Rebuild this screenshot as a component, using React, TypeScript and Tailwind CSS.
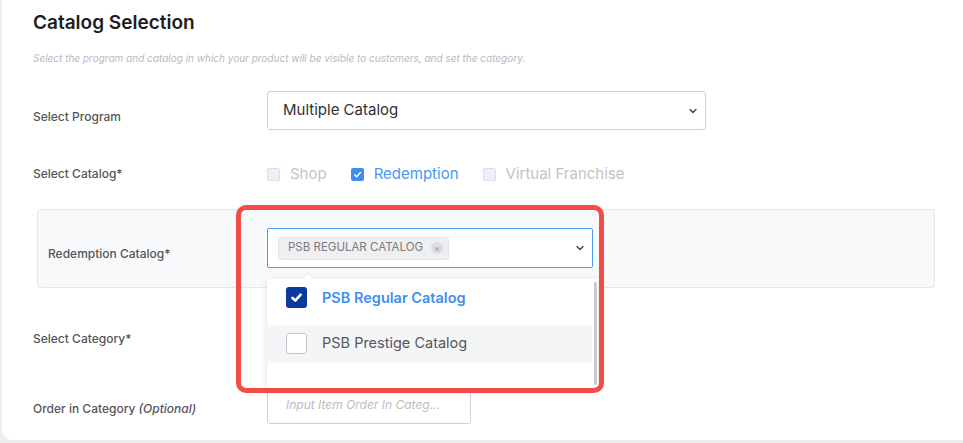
const Chevron = ({ className = "" }: { className?: string }) => (
  <svg viewBox="0 0 12 12" className={className} fill="none" stroke="currentColor" strokeWidth={1.4}>
    <path d="M3 4.5 6 7.5 9 4.5" strokeLinecap="round" strokeLinejoin="round" />
  </svg>
);

const Tick = ({ className = "" }: { className?: string }) => (
  <svg viewBox="0 0 12 12" className={className} fill="none" stroke="currentColor" strokeWidth={1.5}>
    <path d="M2.8 6.3 5 8.4 9.3 3.8" strokeLinecap="round" strokeLinejoin="round" />
  </svg>
);

const Label = ({ children }: { children: React.ReactNode }) => (
  <div className="w-[234px] shrink-0 text-[12px] font-medium text-[#55555c]">{children}</div>
);

const CatalogOption = ({ label, checked }: { label: string; checked?: boolean }) => (
  <label className="flex items-center gap-[10px] mr-[24px]">
    <span
      className={
        checked
          ? "w-[13px] h-[13px] rounded-[2px] bg-[#3d8ef2] text-white flex items-center justify-center"
          : "w-[13px] h-[13px] rounded-[2px] bg-[#eef1f9] border border-[#d9dde6]"
      }
    >
      {checked && <Tick className="w-[11px] h-[11px]" />}
    </span>
    <span className={checked ? "text-[15px] text-[#4a97f3]" : "text-[15px] text-[#c2c3c9]"}>{label}</span>
  </label>
);

export default function App() {
  return (
    <div className="min-h-[443px] bg-[#eeeeef] pl-[2px] font-[Inter,'Noto_Sans',sans-serif]">
      <div className="relative h-[440px] bg-white rounded-bl-[10px] pl-[31px] pt-[10px]">
        <h1 className="text-[19px] font-semibold text-[#1d1d22] leading-[26px]">Catalog Selection</h1>
        <p className="mt-[16px] text-[10px] italic text-[#b9b9c2] leading-[12px]">
          Select the program and catalog in which your product will be visible to customers, and set the category.
        </p>

        {/* program */}
        <div className="mt-[27px] flex items-center">
          <div className="mt-[13px]">
            <Label>Select Program</Label>
          </div>
          <div className="w-[439px] h-[39px] border border-[#cfd1d8] rounded-[3px] flex items-center justify-between pl-[15px] pr-[6px]">
            <span className="text-[15px] text-[#303036]">Multiple Catalog</span>
            <Chevron className="w-[12px] h-[12px] text-[#444]" />
          </div>
        </div>

        {/* catalogs */}
        <div className="mt-[32px] flex items-center h-[24px]">
          <Label>Select Catalog*</Label>
          <CatalogOption label="Shop" />
          <CatalogOption label="Redemption" checked />
          <CatalogOption label="Virtual Franchise" />
        </div>

        {/* redemption catalog */}
        <div className="mt-[23px] ml-[4px] w-[898px] h-[79px] bg-[#f8f9fb] border border-[#e4e6eb] rounded-[4px] flex items-center pl-[10px]">
          <div className="w-[219px] shrink-0 mt-[11px] text-[12px] font-medium text-[#55555c]">Redemption Catalog*</div>
          <div className="w-[326px] h-[40px] bg-white border border-[#4b9cf4] rounded-[2px] flex items-center justify-between pl-[10px] pr-[6px] -mt-[1px]">
            <span className="h-[23px] flex items-center gap-[8px] bg-[#efeff1] border border-[#e4e4e7] rounded-[3px] pl-[9px] pr-[5px]">
              <span className="text-[11.5px] text-[#7a7a82]">PSB REGULAR CATALOG</span>
              <span className="w-[12px] h-[12px] rounded-full bg-[#dcdce0] text-[#9a9aa2] flex items-center justify-center text-[9px] leading-none">×</span>
            </span>
            <Chevron className="w-[12px] h-[12px] text-[#444]" />
          </div>
        </div>

        {/* category */}
        <div className="mt-[39px] flex items-center h-[24px]">
          <Label>Select Category*</Label>
        </div>

        {/* order */}
        <div className="mt-[38px] flex items-center">
          <div className="mt-[4px]">
            <Label>
              Order in Category <span className="italic">(Optional)</span>
            </Label>
          </div>
          <div className="w-[204px] h-[35px] border border-[#cfd1d8] rounded-[3px] flex items-center pl-[18px]">
            <span className="text-[12px] italic text-[#bcbcc4] -mt-[4px]">Input Item Order In Categ...</span>
          </div>
        </div>

        {/* open dropdown of the redemption multi-select */}
        <div className="absolute left-[265px] top-[279px] w-[331px] h-[109px] bg-white shadow-[0_2px_8px_rgba(0,0,0,0.12)]">
          <div className="absolute left-[36px] -top-[5px] w-[10px] h-[10px] bg-white rotate-45 border-l border-t border-[#e8e9ed]" />
          <div className="relative flex items-center h-[37px] pl-[19px] gap-[15px]">
            <span className="w-[21px] h-[21px] rounded-[3px] bg-[#0a3a9e] text-white flex items-center justify-center">
              <svg viewBox="0 0 12 12" className="w-[13px] h-[13px]" fill="none" stroke="currentColor" strokeWidth={2.4}>
                <path d="M2.3 6.4 4.9 8.8 9.8 3.4" strokeLinecap="round" strokeLinejoin="round" />
              </svg>
            </span>
            <span className="text-[14.5px] font-semibold text-[#3f8ff2]">PSB Regular Catalog</span>
          </div>
          <div className="mt-[9px] flex items-center h-[38px] pl-[19px] gap-[15px] bg-[#f4f5f7] mr-[6px]">
            <span className="w-[21px] h-[21px] rounded-[3px] bg-white border border-[#c4c6cc] -mt-[2px]" />
            <span className="text-[14.5px] text-[#57575e] -mt-[3px]">PSB Prestige Catalog</span>
          </div>
          <div className="absolute right-[1px] top-[3px] bottom-[3px] w-[3px] rounded-full bg-[#c9cacf]" />
        </div>

        {/* highlight frame */}
        <div className="absolute left-[234px] top-[205px] w-[368px] h-[188px] border-[5px] border-[#f24b48] rounded-[10px]" />
      </div>
    </div>
  );
}
